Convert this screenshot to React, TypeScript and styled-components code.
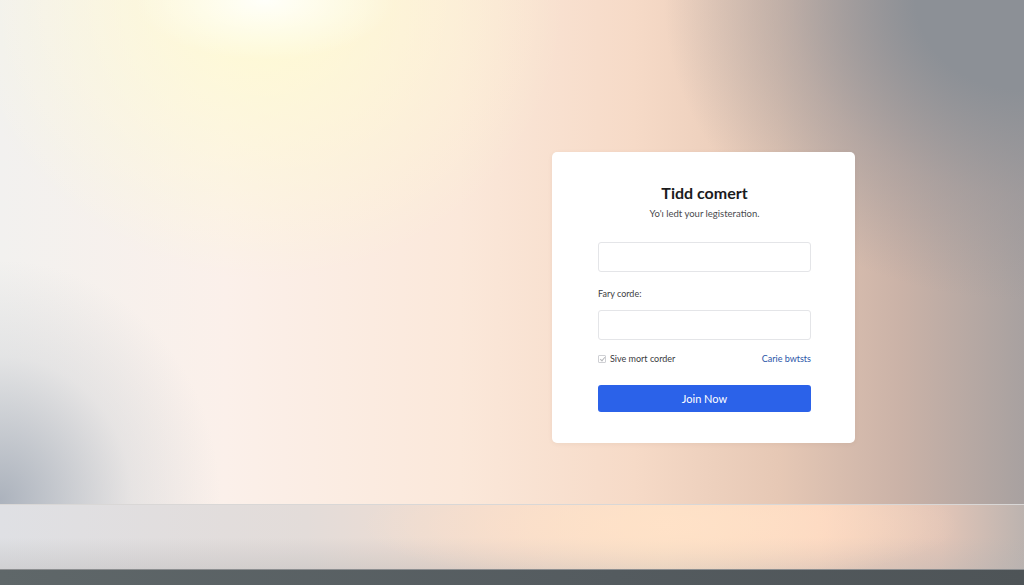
import React, { useState } from "react";
import styled, { createGlobalStyle } from "styled-components";

const GlobalStyle = createGlobalStyle`
  html, body {
    margin: 0;
    padding: 0;
    height: 100%;
    overflow: hidden;
  }
  body {
    font-family: "Lato", "Noto Sans", sans-serif;
  }
  #root {
    height: 100%;
  }
`;

const RegisterCard = () => {
  const [saved, setSaved] = useState(true);
  const [name, setName] = useState("");
  const [code, setCode] = useState("");

  return (
    <Card>
      <Title>Tidd comert</Title>
      <Subtitle>Yo'ı ledt your legisteration.</Subtitle>
      <Field>
        <Input value={name} onChange={(e) => setName(e.target.value)} />
      </Field>
      <Field>
        <Label htmlFor="code">Fary corde:</Label>
        <Input id="code" value={code} onChange={(e) => setCode(e.target.value)} />
      </Field>
      <OptionsRow>
        <CheckLabel>
          <Check
            type="checkbox"
            checked={saved}
            onChange={(e) => setSaved(e.target.checked)}
          />
          Sive mort corder
        </CheckLabel>
        <Link href="#">Carie bwtsts</Link>
      </OptionsRow>
      <JoinButton type="button">Join Now</JoinButton>
    </Card>
  );
};

const App = () => {
  return (
    <Page>
      <GlobalStyle />
      <Wall>
        <RegisterCard />
      </Wall>
      <Floor />
      <Base />
    </Page>
  );
};

const Page = styled.div`
  height: 585px;
  display: flex;
  flex-direction: column;
`;

const Wall = styled.div`
  flex: 1;
  display: flex;
  justify-content: flex-end;
  align-items: flex-start;
  padding: 152px 169px 0 0;
  background:
    radial-gradient(ellipse 130px 60px at 265px 0, rgba(255, 255, 250, 1), rgba(255, 255, 240, 0)),
    radial-gradient(ellipse 300px 280px at 265px 0, rgba(255, 252, 210, 0.95), rgba(255, 250, 225, 0)),
    radial-gradient(ellipse 360px 300px at 1024px 0, rgba(140, 144, 150, 1) 30%, rgba(150, 148, 152, 0.5) 65%, rgba(160, 155, 155, 0)),
    radial-gradient(ellipse 220px 240px at 0 500px, rgba(168, 175, 186, 0.95), rgba(200, 204, 210, 0.35) 60%, rgba(230, 230, 232, 0)),
    linear-gradient(to right, #f2f1ef 0%, #fbf0ea 22%, #fbe8da 45%, #f6dac7 62%, #e6c8b5 76%, #cab2a7 88%, #a8a1a0 100%);
`;

const Floor = styled.div`
  height: 64px;
  border-top: 1px solid #d9d7d6;
  background:
    radial-gradient(ellipse 300px 60px at 660px 20px, rgba(255, 226, 200, 0.9), rgba(255, 226, 200, 0)),
    linear-gradient(to bottom, rgba(255, 255, 255, 0) 50%, rgba(180, 178, 178, 0.35) 100%),
    linear-gradient(to right, #dfe0e4 0%, #e3dcd9 30%, #f5dccd 50%, #fde0c6 65%, #fcd6bf 80%, #e2c5b7 92%, #bcb3af 100%);
`;

const Base = styled.div`
  height: 15px;
  border-top: 1px solid #8c8e90;
  background: linear-gradient(to right, #5f6769, #545b5f 60%, #4e5457);
`;

const Card = styled.div`
  width: 303px;
  height: 291px;
  box-sizing: border-box;
  background: #ffffff;
  border-radius: 5px;
  padding: 32px 44px 0 46px;
  display: flex;
  flex-direction: column;
  box-shadow: 0 1px 4px rgba(120, 90, 70, 0.08);
`;

const Title = styled.h1`
  margin: 0;
  text-align: center;
  font-size: 16px;
  font-weight: 700;
  color: #1b1b1d;
  line-height: 18px;
`;

const Subtitle = styled.p`
  margin: 6px 0 0;
  text-align: center;
  font-size: 9.5px;
  color: #4a4a4e;
  line-height: 12px;
`;

const Field = styled.div`
  display: flex;
  flex-direction: column;
  margin-top: 22px;

  & + & {
    margin-top: 16px;
  }
`;

const Label = styled.label`
  font-size: 9px;
  color: #3e3e42;
  margin-bottom: 10px;
  line-height: 12px;
`;

const Input = styled.input`
  height: 30px;
  box-sizing: border-box;
  border: 1px solid #e4e5e8;
  border-radius: 3px;
  background: #fff;
  padding: 0 8px;
  font-family: inherit;
  outline: none;
`;

const OptionsRow = styled.div`
  display: flex;
  justify-content: space-between;
  align-items: center;
  margin-top: 13px;
  font-size: 9px;
  line-height: 12px;
`;

const CheckLabel = styled.label`
  display: flex;
  align-items: center;
  gap: 4px;
  color: #3a3a3e;
`;

const Check = styled.input`
  appearance: none;
  width: 8px;
  height: 8px;
  margin: 0;
  border: 1px solid #cfd0d4;
  border-radius: 1px;
  background: #fff;
  position: relative;

  &:checked::after {
    content: "";
    position: absolute;
    left: 2px;
    top: 0;
    width: 2px;
    height: 4px;
    border: solid #b8b9bd;
    border-width: 0 1px 1px 0;
    transform: rotate(40deg);
  }
`;

const Link = styled.a`
  color: #2a55a8;
  text-decoration: none;
`;

const JoinButton = styled.button`
  margin-top: 20px;
  height: 27px;
  border: none;
  border-radius: 3px;
  background: #2b62e9;
  color: #ffffff;
  font-family: inherit;
  font-size: 11px;
  cursor: pointer;
`;

export default App;
